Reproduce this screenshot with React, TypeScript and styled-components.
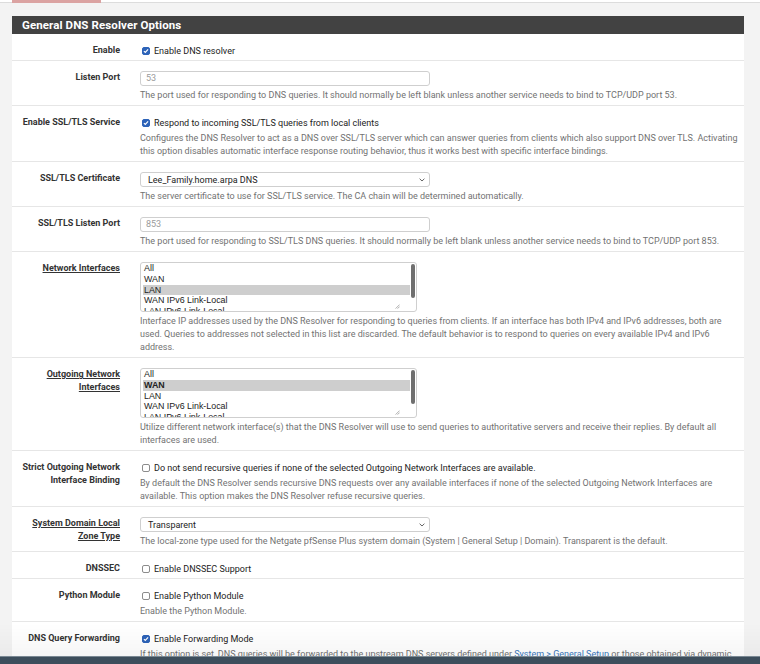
import React from 'react';
import styled, { createGlobalStyle } from 'styled-components';

const GlobalStyle = createGlobalStyle`
  html, body {
    margin: 0;
    padding: 0;
    overflow: hidden;
    background: #f3f3f3;
  }
  body {
    font-family: Roboto, "Liberation Sans", Arial, sans-serif;
    -webkit-font-smoothing: antialiased;
  }
`;

const TabStrip = styled.div`
  height: 2px;
  padding-left: 12px;
  background: #fff;
  border-bottom: 1px solid #dcdcdc;
`;

const ActiveTab = styled.div`
  width: 89px;
  height: 3px;
  background: #dba3a2;
`;

const Panel = styled.section`
  margin: 13px 16px 0 12px;
  background: #fff;
`;

const PanelHeading = styled.h2`
  margin: 0;
  height: 18px;
  padding-left: 10px;
  background: #424242;
  color: #fff;
  font-size: 11.5px;
  font-weight: 700;
  line-height: 18px;
  letter-spacing: 0.1px;
`;

const Row = styled.div`
  display: grid;
  grid-template-columns: 128px 1fr;
  padding: 10px 4px 3px 0;
  border-bottom: 1px solid #e6e6e6;
`;

const Label = styled.div`
  padding-right: 20px;
  text-align: right;
  font-size: 9px;
  font-weight: 700;
  line-height: 13px;
  color: #333;
`;

const LabelLink = styled.span`
  text-decoration: underline;
  text-underline-offset: 1px;
`;

const Field = styled.div`
  min-width: 0;
`;

const CheckLine = styled.label`
  display: flex;
  align-items: center;
  gap: 4px;
  height: 13px;
  padding-left: 2px;
  font-size: 9px;
  color: #222;
`;

const Box = styled.span<{ $checked?: boolean }>`
  display: inline-flex;
  align-items: center;
  justify-content: center;
  box-sizing: border-box;
  width: 8px;
  height: 8px;
  border-radius: 2px;
  background: ${(p) => (p.$checked ? '#2d63b8' : '#fff')};
  border: 1px solid ${(p) => (p.$checked ? '#2d63b8' : '#8c8c8c')};
`;

const Help = styled.p`
  margin: 3px 0 0;
  font-size: 9px;
  line-height: 13px;
  color: #727272;
`;

const HelpLink = styled.span`
  color: #3b78bd;
`;

const TextInput = styled.div<{ $placeholder?: boolean }>`
  box-sizing: border-box;
  width: 290px;
  height: 15px;
  padding-left: 5px;
  border: 1px solid #cfcfcf;
  border-radius: 3px;
  font-size: 9px;
  line-height: 13px;
  color: ${(p) => (p.$placeholder ? '#9a9a9a' : '#222')};
`;

const Select = styled.div`
  box-sizing: border-box;
  display: flex;
  align-items: center;
  justify-content: space-between;
  width: 290px;
  height: 15px;
  padding: 0 4px 0 7px;
  border: 1px solid #cfcfcf;
  border-radius: 3px;
  font-size: 9px;
  color: #222;
`;

const MultiSelect = styled.div`
  position: relative;
  box-sizing: border-box;
  width: 277px;
  height: 50px;
  padding: 0 6px 0 2px;
  overflow: hidden;
  border: 1px solid #cfcfcf;
  border-radius: 3px;
  font-family: "Liberation Sans", Arial, sans-serif;
`;

const Option = styled.div<{ $selected?: boolean; $bold?: boolean }>`
  height: 10.8px;
  padding-left: 1px;
  font-size: 8.9px;
  line-height: 10.8px;
  color: #222;
  background: ${(p) => (p.$selected ? '#cecece' : 'transparent')};
  font-weight: ${(p) => (p.$bold ? 700 : 400)};
`;

const Thumb = styled.div`
  position: absolute;
  top: 1px;
  right: 1px;
  width: 4px;
  height: 34px;
  border-radius: 2px;
  background: #6f6f6f;
`;

const Grip = styled.svg`
  position: absolute;
  right: 16px;
  bottom: 2px;
`;

const Dock = styled.div`
  position: fixed;
  left: 0;
  right: 0;
  bottom: 0;
  height: 7px;
  background: #3d4e5c;
  border-top: 1px solid #7a8893;
`;

const Shade = styled.div`
  position: fixed;
  left: 0;
  right: 0;
  bottom: 7px;
  height: 34px;
  pointer-events: none;
  background: linear-gradient(rgba(0, 0, 0, 0), rgba(0, 0, 0, 0.035));
`;

const Check: React.FC<{ checked?: boolean }> = ({ checked }) => (
  <Box $checked={checked}>
    {checked && (
      <svg width="6" height="6" viewBox="0 0 6 6">
        <path d="M0.9 3.1 L2.3 4.4 L5.1 1.3" stroke="#fff" strokeWidth="1.2" fill="none" />
      </svg>
    )}
  </Box>
);

const Chevron = () => (
  <svg width="6" height="4" viewBox="0 0 6 4">
    <path d="M0.6 0.7 L3 3 L5.4 0.7" stroke="#555" strokeWidth="0.9" fill="none" />
  </svg>
);

const interfaces = ['All', 'WAN', 'LAN', 'WAN IPv6 Link-Local', 'LAN IPv6 Link-Local'];

const InterfaceList: React.FC<{ selected: string; bold?: boolean }> = ({ selected, bold }) => (
  <MultiSelect>
    {interfaces.map((name) => (
      <Option key={name} $selected={name === selected} $bold={bold && name === selected}>
        {name}
      </Option>
    ))}
    <Thumb />
    <Grip width="5" height="5" viewBox="0 0 5 5">
      <path d="M4.6 0.6 L0.6 4.6 M4.6 2.6 L2.6 4.6" stroke="#9a9a9a" strokeWidth="0.8" />
    </Grip>
  </MultiSelect>
);

const App: React.FC = () => {
  return (
    <>
      <GlobalStyle />
      <TabStrip>
        <ActiveTab />
      </TabStrip>
      <Panel>
        <PanelHeading>General DNS Resolver Options</PanelHeading>

        <Row>
          <Label>Enable</Label>
          <Field>
            <CheckLine>
              <Check checked />
              Enable DNS resolver
            </CheckLine>
          </Field>
        </Row>

        <Row>
          <Label>Listen Port</Label>
          <Field>
            <TextInput $placeholder>53</TextInput>
            <Help>
              The port used for responding to DNS queries. It should normally be left blank unless
              another service needs to bind to TCP/UDP port 53.
            </Help>
          </Field>
        </Row>

        <Row>
          <Label>Enable SSL/TLS Service</Label>
          <Field>
            <CheckLine>
              <Check checked />
              Respond to incoming SSL/TLS queries from local clients
            </CheckLine>
            <Help>
              Configures the DNS Resolver to act as a DNS over SSL/TLS server which can answer
              queries from clients which also support DNS over TLS. Activating this option disables
              automatic interface response routing behavior, thus it works best with specific
              interface bindings.
            </Help>
          </Field>
        </Row>

        <Row>
          <Label>SSL/TLS Certificate</Label>
          <Field>
            <Select>
              Lee_Family.home.arpa DNS
              <Chevron />
            </Select>
            <Help>
              The server certificate to use for SSL/TLS service. The CA chain will be determined
              automatically.
            </Help>
          </Field>
        </Row>

        <Row>
          <Label>SSL/TLS Listen Port</Label>
          <Field>
            <TextInput $placeholder>853</TextInput>
            <Help>
              The port used for responding to SSL/TLS DNS queries. It should normally be left blank
              unless another service needs to bind to TCP/UDP port 853.
            </Help>
          </Field>
        </Row>

        <Row>
          <Label>
            <LabelLink>Network Interfaces</LabelLink>
          </Label>
          <Field>
            <InterfaceList selected="LAN" />
            <Help>
              Interface IP addresses used by the DNS Resolver for responding to queries from
              clients. If an interface has both IPv4 and IPv6 addresses, both are used. Queries to
              addresses not selected in this list are discarded. The default behavior is to respond
              to queries on every available IPv4 and IPv6 address.
            </Help>
          </Field>
        </Row>

        <Row>
          <Label>
            <LabelLink>
              Outgoing Network
              <br />
              Interfaces
            </LabelLink>
          </Label>
          <Field>
            <InterfaceList selected="WAN" bold />
            <Help>
              Utilize different network interface(s) that the DNS Resolver will use to send queries
              to authoritative servers and receive their replies. By default all interfaces are
              used.
            </Help>
          </Field>
        </Row>

        <Row>
          <Label>
            Strict Outgoing Network
            <br />
            Interface Binding
          </Label>
          <Field>
            <CheckLine>
              <Check />
              Do not send recursive queries if none of the selected Outgoing Network Interfaces are
              available.
            </CheckLine>
            <Help>
              By default the DNS Resolver sends recursive DNS requests over any available interfaces
              if none of the selected Outgoing Network Interfaces are available. This option makes
              the DNS Resolver refuse recursive queries.
            </Help>
          </Field>
        </Row>

        <Row>
          <Label>
            <LabelLink>
              System Domain Local
              <br />
              Zone Type
            </LabelLink>
          </Label>
          <Field>
            <Select>
              Transparent
              <Chevron />
            </Select>
            <Help>
              The local-zone type used for the Netgate pfSense Plus system domain (System | General
              Setup | Domain). Transparent is the default.
            </Help>
          </Field>
        </Row>

        <Row>
          <Label>DNSSEC</Label>
          <Field>
            <CheckLine>
              <Check />
              Enable DNSSEC Support
            </CheckLine>
          </Field>
        </Row>

        <Row>
          <Label>Python Module</Label>
          <Field>
            <CheckLine>
              <Check />
              Enable Python Module
            </CheckLine>
            <Help>Enable the Python Module.</Help>
          </Field>
        </Row>

        <Row>
          <Label>DNS Query Forwarding</Label>
          <Field>
            <CheckLine>
              <Check checked />
              Enable Forwarding Mode
            </CheckLine>
            <Help>
              If this option is set, DNS queries will be forwarded to the upstream DNS servers
              defined under <HelpLink>System &gt; General Setup</HelpLink> or those obtained via
              dynamic DNS from the WAN.
            </Help>
          </Field>
        </Row>
      </Panel>
      <Shade />
      <Dock />
    </>
  );
};

export default App;
